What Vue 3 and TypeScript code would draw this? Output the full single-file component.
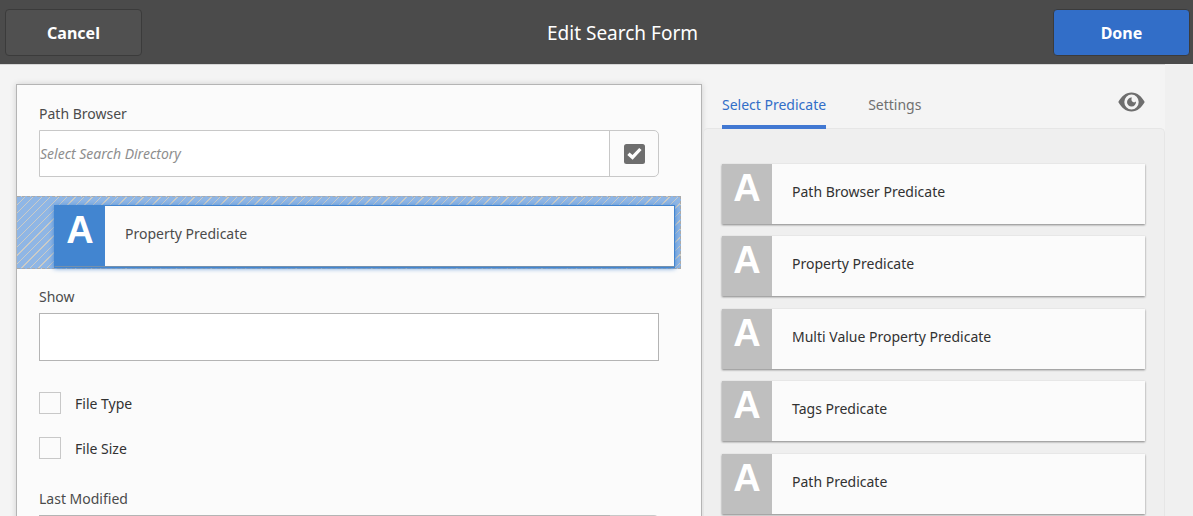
<script setup lang="ts">
import { ref } from 'vue'

const path = ref('')
const show = ref('')
const modified = ref('')
const tabs = ['Select Predicate', 'Settings']
const activeTab = ref(0)
const filters = ref([
  { id: 'file-type', label: 'File Type', checked: false },
  { id: 'file-size', label: 'File Size', checked: false },
])
const predicates = [
  'Path Browser Predicate',
  'Property Predicate',
  'Multi Value Property Predicate',
  'Tags Predicate',
  'Path Predicate',
]
</script>

<template>
  <div class="page">
    <header class="bar">
      <button class="btn" type="button">Cancel</button>
      <h1>Edit Search Form</h1>
      <button class="btn primary" type="button">Done</button>
    </header>

    <main class="body">
      <form class="form" @submit.prevent>
        <div class="field">
          <label for="path">Path Browser</label>
          <div class="picker">
            <input id="path" v-model="path" type="text" placeholder="Select Search Directory" />
            <button type="button" aria-label="Choose path">
              <svg width="21" height="21" viewBox="0 0 21 21">
                <rect y="1" width="21" height="20" rx="2.5" fill="#6e6e6e" />
                <path d="M3.300 12 5.600 9.600 8.500 12.100 15.200 4.900 17.600 6.900 8.600 16.800Z" fill="#fff" />
              </svg>
            </button>
          </div>
        </div>

        <div class="drop">
          <div class="card selected">
            <span class="glyph">A</span>
            <span class="name">Property Predicate</span>
          </div>
        </div>

        <div class="field">
          <label for="show">Show</label>
          <input id="show" v-model="show" class="text" type="text" />
        </div>

        <div class="checks">
          <div v-for="f in filters" :key="f.id" class="check">
            <input :id="f.id" v-model="f.checked" type="checkbox" />
            <label :for="f.id">{{ f.label }}</label>
          </div>
        </div>

        <div class="field">
          <label for="modified">Last Modified</label>
          <div class="picker date">
            <input id="modified" v-model="modified" type="text" />
            <button type="button" aria-label="Choose date"></button>
          </div>
        </div>
      </form>

      <section class="side">
        <nav class="tabs">
          <button
            v-for="(t, i) in tabs"
            :key="t"
            type="button"
            class="tab"
            :class="{ active: i === activeTab }"
            @click="activeTab = i"
          >{{ t }}</button>
          <button class="eye" type="button" aria-label="Preview">
            <svg width="28" height="20" viewBox="0 0 28 20">
              <path
                fill="#6e6e6e"
                fill-rule="evenodd"
                d="M.3 10C3.500 4.500 7.500 .5 13.500 .5S23.500 4.500 26.700 10C23.500 15.500 19.500 19.500 13.500 19.500S3.500 15.500 .3 10ZM13.500 2.400A7.200 7.600 0 0 0 13.500 17.600 7.200 7.600 0 0 0 13.500 2.400Z"
              />
              <path fill="#6e6e6e" d="M14 5.600A4.500 4.500 0 1 0 18 9.600C17 10.600 15.200 10.700 14.200 9.600 13.100 8.300 13.400 6.600 14 5.600Z" />
            </svg>
          </button>
        </nav>
        <ul class="list">
          <li v-for="p in predicates" :key="p" class="card">
            <span class="glyph">A</span>
            <span class="name">{{ p }}</span>
          </li>
        </ul>
      </section>
    </main>
  </div>
</template>

<style>
body {
  background: #f0f0f0;
}
</style>

<style scoped>
* {
  box-sizing: border-box;
}
.page {
  height: 100vh;
  overflow: hidden;
  display: flex;
  flex-direction: column;
  font-family: 'Noto Sans', sans-serif;
  font-size: 14px;
  line-height: 20px;
  color: #4b4b4b;
}
button,
input {
  font: inherit;
  color: inherit;
  margin: 0;
  padding: 0;
}
.bar {
  flex: none;
  height: 64px;
  padding: 0 3px 0 5px;
  display: flex;
  align-items: center;
  justify-content: space-between;
  background: #4b4b4b;
}
h1 {
  margin: 0;
  padding: 2px 0 0 50px;
  font-size: 19px;
  font-weight: 400;
  line-height: 24px;
  color: #fff;
}
.btn {
  width: 137px;
  height: 47px;
  padding-top: 1px;
  border: 1px solid #3b3b3b;
  border-radius: 4px;
  background: #505050;
  color: #fff;
  font-size: 16px;
  font-weight: 700;
}
.btn.primary {
  background: #326ec8;
}
.body {
  flex: 1;
  min-height: 0;
  display: grid;
  grid-template-columns: 686fr 463fr;
  padding: 0 28px 0 16px;
  background: linear-gradient(#d6d6d6 1px, #f4f4f4 1px) 0 0 / calc(100% - 28px) 100% no-repeat;
}
.form {
  margin-top: 20px;
  padding: 19px 20px 0 0;
  border: 1px solid #b4b4b4;
  border-bottom: 0;
  background: #fbfbfb;
  box-shadow: 0 0 6px rgba(0, 0, 0, 0.15);
}
.field {
  padding: 0 22px;
}
.field > label {
  display: block;
  margin-bottom: 6px;
}
.picker {
  display: flex;
  height: 47px;
  border: 1px solid #c8c8c8;
  border-radius: 0 5px 5px 0;
}
.picker input {
  flex: 1;
  min-width: 0;
  border: 0;
  background: #fff;
}
.picker.date {
  border: 0;
}
.date input {
  border: 1px solid #b4b4b4;
}
.picker input::placeholder {
  color: #8e8e8e;
  font-style: italic;
  opacity: 1;
}
.picker button {
  width: 49px;
  border: 0;
  border-left: 1px solid #c8c8c8;
  background: none;
  display: grid;
  place-items: center;
}
.date button {
  border: 1px solid #c8c8c8;
  border-left: 0;
  border-radius: 0 5px 5px 0;
}
.drop {
  margin: 19px 0 18px;
  padding: 8px 5px 0 37px;
  height: 73px;
  border: 1px dashed #aaa;
  border-left: 0;
  background: repeating-linear-gradient(135deg, #8fb6e5 0 5px, #cbcbc6 5px 6px);
}
.card {
  display: flex;
  height: 60px;
  background: #fbfbfb;
  box-shadow: 0 1px 2px rgba(0, 0, 0, 0.45);
}
.glyph {
  width: 50px;
  background: #bfbfbf;
  color: #fff;
  font: 700 38px/48px 'Liberation Sans', sans-serif;
  text-align: center;
}
.name {
  padding: 18px 20px 0;
  color: #323232;
}
.card.selected {
  height: 62px;
  border: 1px solid #4285d0;
  border-bottom-color: #7390ad;
  box-shadow: 0 1px #4285d0, 0 1px 5px #4285d0;
}
.selected .glyph {
  background: #4285d0;
}
.selected .name {
  color: #4b4b4b;
}
.text {
  display: block;
  width: 100%;
  height: 48px;
  border: 1px solid #b4b4b4;
  background: #fff;
}
.checks {
  padding: 31px 22px 30px;
  display: grid;
  gap: 23px;
}
.check {
  display: flex;
  align-items: center;
  gap: 14px;
  height: 22px;
  color: #323232;
}
.check input {
  appearance: none;
  width: 22px;
  height: 22px;
  border: 1px solid #c8c8c8;
}
.check label {
  padding-top: 2px;
}
.check input:checked {
  background: #326ec8;
}
.side {
  display: flex;
  flex-direction: column;
  min-width: 0;
}
.tabs {
  position: relative;
  flex: none;
  height: 65px;
  padding: 0 19px 0 20px;
  display: flex;
  align-items: flex-end;
  gap: 42px;
}
.tab {
  height: 46px;
  padding-top: 2px;
  border: 0;
  border-bottom: 4px solid transparent;
  background: none;
  color: #707070;
}
.tab.active {
  color: #326ec8;
  border-color: #4178d2;
}
.eye {
  margin-left: auto;
  margin-bottom: 17px;
  height: 20px;
  border: 0;
  background: none;
}
.eye svg {
  display: block;
}
.list {
  flex: 1;
  margin: -1px 0 0 1px;
  padding: 35px 19px 0 18px;
  list-style: none;
  border: 1px solid #e6e6e6;
  border-bottom: 0;
  border-radius: 5px 5px 0 0;
  background: #efefef;
}
.list .card {
  margin-bottom: 12px;
}
.list .card:nth-child(even) {
  margin-bottom: 13px;
}
</style>
